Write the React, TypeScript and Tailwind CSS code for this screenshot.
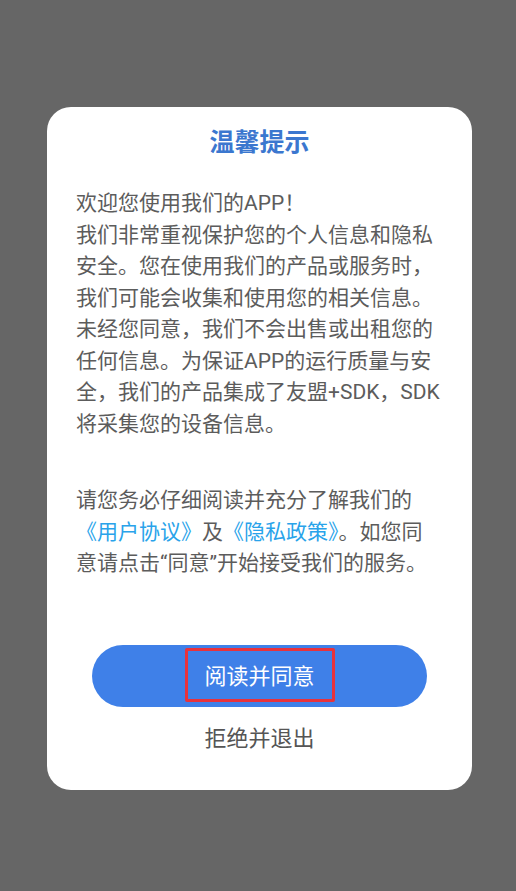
import React from "react";

const lines1 = [
  "欢迎您使用我们的APP！",
  "我们非常重视保护您的个人信息和隐私",
  "安全。您在使用我们的产品或服务时，",
  "我们可能会收集和使用您的相关信息。",
  "未经您同意，我们不会出售或出租您的",
  "任何信息。为保证APP的运行质量与安",
  "全，我们的产品集成了友盟+SDK，SDK",
  "将采集您的设备信息。",
];

export default function App() {
  return (
    <div
      className="w-full min-h-[891px] bg-[#666666] pt-[107px] px-[47px]"
      style={{ fontFamily: 'Roboto, "Noto Sans CJK SC", sans-serif' }}
    >
      <div className="w-[425px] h-[683px] bg-white rounded-[24px] flex flex-col pt-[18px]">
        <div className="text-center text-[25px] leading-[35px] font-bold text-[#3b77cf]">
          温馨提示
        </div>
        <div className="mt-[28px] px-[29px] text-[21px] leading-[31.5px] text-[#5c5c5c] whitespace-nowrap">
          {lines1.map((l) => (
            <div key={l}>{l}</div>
          ))}
          <div className="mt-[45px]">请您务必仔细阅读并充分了解我们的</div>
          <div>
            <span className="text-[#29a3ea]">《用户协议》</span>及
            <span className="text-[#29a3ea]">《隐私政策》</span>。如您同
          </div>
          <div>意请点击“同意”开始接受我们的服务。</div>
        </div>
        <div className="mt-[65px] flex justify-center">
          <button className="w-[335px] h-[62px] rounded-full bg-[#3f80e8] flex items-center justify-center">
            <span className="w-[150px] h-[54px] border-[3px] border-[#e8323c] rounded-[2px] flex items-center justify-center text-white text-[22px] leading-none pt-[4px] -mt-[2px]">
              阅读并同意
            </span>
          </button>
        </div>
        <div className="mt-[17px] text-center text-[22px] leading-[30px] text-[#555555]">
          拒绝并退出
        </div>
      </div>
    </div>
  );
}
